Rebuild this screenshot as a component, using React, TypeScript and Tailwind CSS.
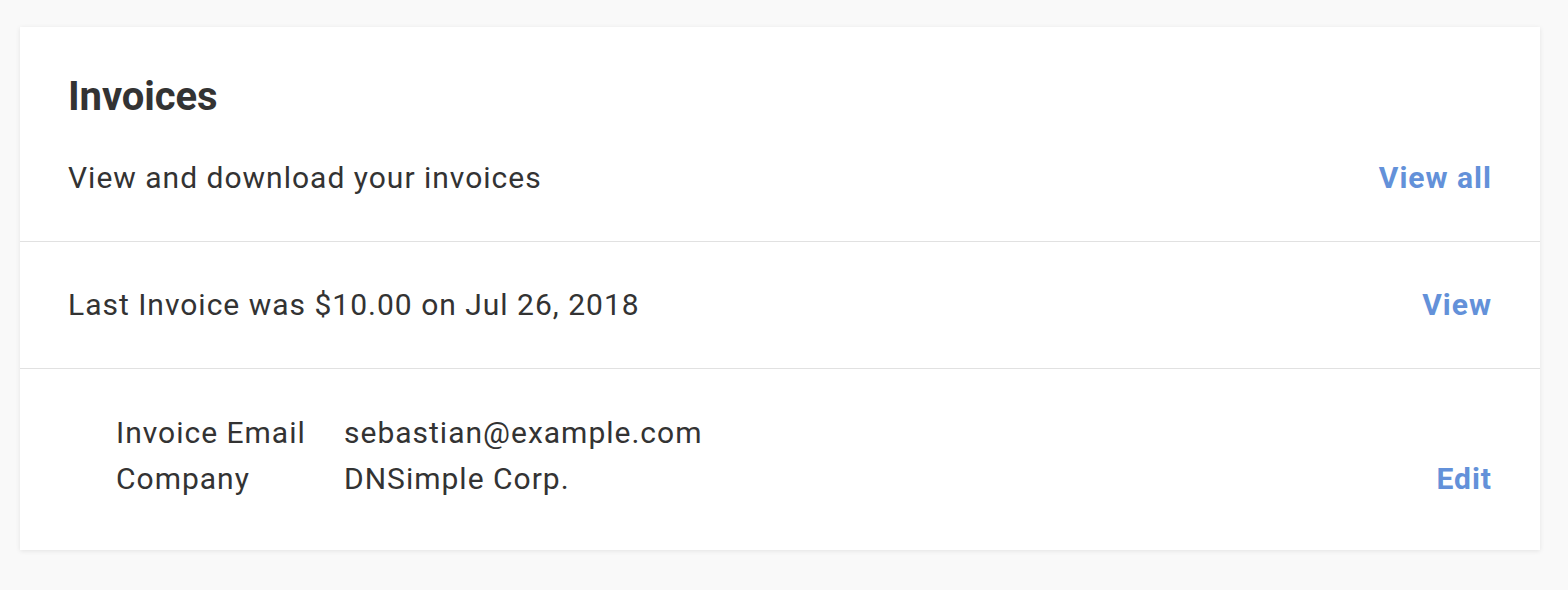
import React from "react";

export default function App() {
  return (
    <div className="min-h-[590px] w-full bg-[#f9f9f9] pt-[27px] pl-[20px] font-['Roboto',sans-serif] text-[#333333]">
      <div className="w-[1520px] bg-white shadow-[0_1px_5px_rgba(0,0,0,0.09)]">
        <div className="px-[48px] pt-[46px] pb-[45px]">
          <h1 className="text-[40px] font-bold leading-[48px] tracking-[-0.1px]">Invoices</h1>
          <div className="mt-[39px] flex items-center justify-between tracking-[1px]">
            <p className="text-[30px] leading-[36px]">View and download your invoices</p>
            <a className="text-[30px] font-bold leading-[36px] text-[#6391d9]" href="#">View all</a>
          </div>
        </div>
        <div className="border-t border-[#e1e1e1] px-[48px] py-[45px] flex items-center justify-between tracking-[1px]">
          <p className="text-[30px] leading-[36px]">Last Invoice was $10.00 on Jul 26, 2018</p>
          <a className="text-[30px] font-bold leading-[36px] text-[#6391d9]" href="#">View</a>
        </div>
        <div className="border-t border-[#e1e1e1] px-[48px] pt-[41px] pb-[48px] flex items-end justify-between tracking-[1px]">
          <div className="pl-[48px] text-[30px] leading-[46px]">
            <div className="flex">
              <span className="w-[228px]">Invoice Email</span>
              <span>sebastian@example.com</span>
            </div>
            <div className="flex">
              <span className="w-[228px]">Company</span>
              <span>DNSimple Corp.</span>
            </div>
          </div>
          <a className="text-[30px] font-bold leading-[46px] text-[#6391d9]" href="#">Edit</a>
        </div>
      </div>
    </div>
  );
}
